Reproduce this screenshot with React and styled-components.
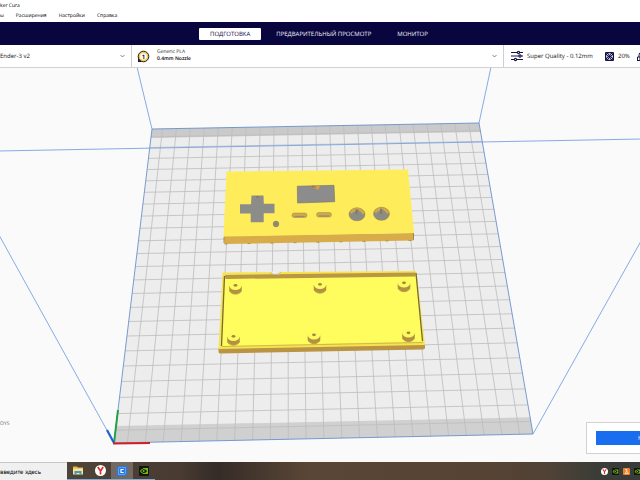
import React from 'react';
import styled, { createGlobalStyle } from 'styled-components';

const Global = createGlobalStyle`
  * { box-sizing: border-box; }
  body { margin: 0; overflow: hidden; font-family: "Open Sans", "Noto Sans", sans-serif; background: #fafafa; text-rendering: geometricPrecision; }
  button { font-family: inherit; text-rendering: inherit; border: 0; padding: 0; cursor: pointer; }
`;

const Page = styled.div`
  height: 100vh;
  display: flex;
  flex-direction: column;
  overflow: hidden;
`;
const TitleBar = styled.header`
  height: 11px;
  flex: none;
  font-size: 5px;
  line-height: 12px;
  background: #fff;
  color: #000;
  white-space: nowrap;
`;
const MenuBar = styled.nav`
  height: 11px;
  flex: none;
  display: flex;
  gap: 12px;
  background: #fff;
`;
const MenuItem = styled.button`
  background: none;
  font-size: 5px;
  line-height: 11px;
  color: #000;
`;
const StageBar = styled.nav`
  height: 23px;
  flex: none;
  display: flex;
  justify-content: center;
  align-items: center;
  gap: 4px;
  background: #09053f;
  padding-right: 2px;
`;
const Stage = styled.button`
  height: 12px;
  padding: 0 11px;
  border-radius: 1px;
  font-size: 6px;
  line-height: 12px;
  white-space: nowrap;
  background: ${p => (p.$active ? '#fff' : 'transparent')};
  color: ${p => (p.$active ? '#09053f' : '#f4f3fa')};
`;
const SettingsBar = styled.div`
  height: 23px;
  flex: none;
  display: grid;
  grid-template-columns: 132fr 372fr 136fr;
  background: #fff;
  border-bottom: 1px solid #d2d2d4;
`;
const Selector = styled.button`
  display: flex;
  align-items: center;
  min-width: 0;
  gap: ${p => p.$gap || 0}px;
  padding: 0 ${p => (p.$last ? 0 : 6)}px 0 ${p => p.$inset || 0}px;
  background: #fff;
  border-right: ${p => (p.$last ? '0' : '1px solid #cfcfd3')};
  color: #111;
  font-size: 6px;
  line-height: 7px;
  text-align: left;
  white-space: nowrap;
  overflow: hidden;
`;
const Grow = styled.span`
  flex: 1;
`;
const Stack = styled.span`
  flex: 1;
  display: flex;
  flex-direction: column;
  font-size: 5px;
  color: #222;
  b { font-weight: 600; color: #000; }
`;
const Icon = styled.svg`
  display: block;
  flex: none;
  overflow: visible;
`;
const Quality = styled.span`
  width: 74px;
  flex: none;
`;
const Percent = styled.span`
  width: 15px;
  flex: none;
`;
const Workspace = styled.main`
  flex: 1;
  min-height: 0;
  position: relative;
  background: #fafafa;
`;
const Scene = styled.svg`
  display: block;
  width: 100%;
  height: 100%;
`;
const JobName = styled.span`
  position: absolute;
  left: 0;
  bottom: 34px;
  font-size: 5px;
  line-height: 8px;
  color: #666;
`;
const ActionPanel = styled.section`
  position: absolute;
  right: -2px;
  bottom: 8px;
  width: 56px;
  height: 32px;
  padding: 8px 0 8px 9px;
  background: #fff;
  border: 1px solid #d2d2d2;
  overflow: hidden;
`;
const SliceButton = styled.button`
  width: 108px;
  height: 14px;
  display: block;
  background: #196ef0;
  color: #fff;
  font-size: 6px;
`;
const Taskbar = styled.footer`
  height: 18px;
  flex: none;
  display: flex;
  align-items: stretch;
  background: linear-gradient(90deg, #504338 10%, #493b31 28%, #342c27 34%, #5a4636 48%, #574334 75%, #504235 86%, #3a3d37 93%, #383b38);
`;
const Search = styled.button`
  width: 67px;
  flex: none;
  background: #f0f0f0;
  border-top: 1px solid #c8c8c8;
  color: #000;
  && { font-family: "Noto Sans", sans-serif; }
  font-size: 6px;
  line-height: 16px;
  text-align: left;
  white-space: nowrap;
`;
const TaskButton = styled.button`
  width: 22px;
  display: flex;
  align-items: center;
  justify-content: center;
  background: ${p => (p.$active ? '#716962' : 'transparent')};
  border-bottom: 1px solid #79aeda;
`;
const Tray = styled.div`
  display: flex;
  align-items: center;
  gap: 4px;
  margin-left: auto;
  margin-right: -1px;
`;

/* Perspective mapping of build-plate grid cells to the viewport. */
const SIZE = 23.5;
const corners = [[152, 129], [479, 123], [533, 434], [114, 443]];
const [[x0, y0], [x1, y1], [x2, y2], [x3, y3]] = corners;
const dx1 = x1 - x2, dx2 = x3 - x2, sx = x0 - x1 + x2 - x3;
const dy1 = y1 - y2, dy2 = y3 - y2, sy = y0 - y1 + y2 - y3;
const det = dx1 * dy2 - dx2 * dy1;
const g = (sx * dy2 - dx2 * sy) / det;
const h = (dx1 * sy - sx * dy1) / det;
const project = (a, b) => {
  const u = a / SIZE, v = b / SIZE, w = g * u + h * v + 1;
  const x = ((x1 - x0 + g * x1) * u + (x3 - x0 + h * x3) * v + x0) / w;
  const y = ((y1 - y0 + g * y1) * u + (y3 - y0 + h * y3) * v + y0) / w;
  return x.toFixed(1) + ' ' + y.toFixed(1);
};
const quad = (a, b) => `M${project(0, a)}L${project(SIZE, a)}L${project(SIZE, b)}L${project(0, b)}Z`;
const stops = Array.from({ length: 23 }, (_, i) => i + 0.75);
const grid = stops.map(s =>
  `M${project(s, 0)}L${project(s, SIZE)}M${project(0, s)}L${project(SIZE, s)}`).join('');

const posts = [[235.5, 286], [320, 285], [404, 283.5], [233.5, 337], [314, 335.5], [408.5, 333.5]];

const Post = ({ x, y }) => (
  <g>
    <path d={`M${x - 6.3} ${y}v3a6.3 5 0 0 0 12.6 0v-3z`} fill="#b39140" />
    <path d={`M${x - 6} ${y + 4}a6 4.200 0 0 0 12 0`} fill="none" stroke="#927a3b" strokeWidth=".6" />
    <ellipse cx={x} cy={y - 0.5} rx="6.200" ry="4.6" fill="#fffb5e" />
    <ellipse cx={x} cy={y - 0.7} rx="1.900" ry="1.4" fill="#9c8a40" />
  </g>
);

const BuildPlate = () => (
  <Scene viewBox="0 68 640 394" preserveAspectRatio="xMidYMid meet" role="img" aria-label="3D">
    <path d={quad(0, SIZE)} fill="#ededed" />
    <path d={quad(0, 0.85)} fill="#cacaca" />
    <path d={quad(22.5, SIZE)} fill="#d0d0d0" />
    <path d={grid} fill="none" stroke="#bcbcbc" strokeWidth=".8" />
    <path d={quad(0, SIZE)} fill="none" stroke="#6c91c9" strokeWidth=".9" />
    <path d="M137 67 152 129M491 67 479 123M-2 151 642 139M-1 235 114 443M641 241 533 434" fill="none" stroke="#79a2e3" strokeWidth=".9" />
    <path d="M114 443 118 410" stroke="#23a044" strokeWidth="2" />
    <path d="M114 443 107 430" stroke="#1c64d4" strokeWidth="2.2" />
    <path d="M113 443.5 150 443" stroke="#d01f27" strokeWidth="2" />

    <path d="M224 236 414 233 413.5 240.5 224.5 244Z" fill="#d8ad49" />
    <path d="M226.5 171.5 408 169.5 414 233 223.5 236.5Z" fill="#ffec5b" />
    <path d="M224 237v6M413.5 233v7" stroke="#8a7040" strokeWidth=".7" />
    <path d="M224.5 244 413.5 240.5" stroke="#aa883f" strokeWidth=".8" strokeDasharray="3 20" />
    <path d="M251.5 195.5h12l.3 8.3h10.7v9.5h-10.8v9h-13v-8.7h-10.7v-9.3h11z" fill="#8c8c89" />
    <path d="M297.3 186.2 334 185.3 334.7 201.7 297.5 203Z" fill="#8c8c8c" stroke="#77736a" strokeWidth=".6" />
    <path d="M314 186 320 186 318.5 189.5 315.5 189Z" fill="#d6a142" />
    <path d="M312 186.2h3l1.5 2" fill="none" stroke="#c9552f" strokeWidth=".7" />
    <path d="M256 197h3" stroke="#ad5544" strokeWidth=".8" />
    {[299.5, 324].map(x => (
      <g key={x}>
        <rect x={x - 7.5} y={x > 310 ? 212.5 : 213} width="15" height="4.5" rx="2.2" fill="#cfa947" stroke="#a18945" strokeWidth=".5" />
        <path d={`M${x - 5} ${x > 310 ? 216 : 216.5}h10`} stroke="#8c8c80" strokeWidth="1.2" />
      </g>
    ))}
    <circle cx="276" cy="224" r="2.9" fill="#8d887a" stroke="#a28a45" strokeWidth=".6" />
    {[[357, 214.3], [381.5, 213.8]].map(([x, y]) => (
      <g key={x}>
        <ellipse cx={x} cy={y} rx="8" ry="6.5" fill="#8c8c87" stroke="#a18a42" strokeWidth=".6" />
        <path d={`M${x - 7} ${y - 2.5}q2-3.600 7-3.800 5.500 .2 7.500 4.800l-2 2q-1-3.500-3.500-3.500v-1.500h-3v1.500q-3 0-4.500 3z`} fill="#d0a944" />
        <path d={`M${x - 0.5} ${y - 5}v5`} stroke="#7e776c" strokeWidth="1.800" />
      </g>
    ))}

    <path d="M218.5 348 425 344v3.5q0 1.8-2 2L220 353.5q-1.500 0-1.500-2z" fill="#b99443" />
    <path d="M222.5 272.500 415 271q1.500 0 1.700 1.500L425 345 218.500 349Z" fill="#f7e352" />
    <path d="M225 276.500 416 272.500 422.500 341.500 221.500 346Z" fill="#fffc5e" />
    <path d="M225 275 415.500 272.500 415.500 276.500 225.500 279Z" fill="#ba9843" />
    <path d="M224.500 276 221.500 346M416 273 422.500 341" fill="none" stroke="#776a38" strokeWidth="1.300" />
    <path d="M222 346.500 423 342.500" stroke="#c7ad46" strokeWidth=".8" />
    <path d="M270.500 271.500h10l-1.500 3h-6z" fill="#eee" />
    <path d="M270 272.500q3 2.500 6 2t5-2.500" fill="none" stroke="#c3a94d" strokeWidth=".7" />
    {posts.map(([x, y]) => <Post key={x} x={x} y={y} />)}
  </Scene>
);

const Chevron = () => (
  <Icon width="5" height="4" viewBox="0 0 5 4"><path d="M.5 1 2.500 3 4.500 1" fill="none" stroke="#555" strokeWidth=".7" /></Icon>
);
const Spool = () => (
  <Icon width="13" height="13" viewBox="0 0 13 13">
    <path d="M1 5v7h4" fill="#171438" />
    <circle cx="6.500" cy="6.500" r="5.300" fill="#f5ca48" stroke="#272029" strokeWidth="1" />
    <circle cx="6.500" cy="6.500" r="3.300" fill="#fff" />
    <text x="6.500" y="8.500" textAnchor="middle" fontSize="6" fontWeight="700" fill="#171438">1</text>
  </Icon>
);
const Sliders = () => (
  <Icon width="12" height="10" viewBox="0 0 12 10" fill="#fff" stroke="#15134a" strokeWidth="1.100">
    <path d="M0 1.500h12M0 5h12M0 8.500h12" />
    <circle cx="7.500" cy="1.500" r="1.100" /><circle cx="9" cy="5" r="1.100" /><circle cx="4.500" cy="8.500" r="1.100" />
  </Icon>
);
const Infill = () => (
  <Icon width="9" height="9" viewBox="0 0 9 9">
    <rect width="9" height="9" rx="1" fill="#15134a" />
    <path d="M3 1.200h3L4.500 2.900zM3 7.800h3L4.500 6.100zM1.200 3v3L2.900 4.500zM7.800 3v3L6.100 4.500z" fill="#fff" />
    <path d="M1.800 1.800 3.600 3.600M7.200 1.800 5.400 3.600M1.800 7.200 3.600 5.400M7.200 7.200 5.400 5.400" stroke="#fff" strokeWidth=".8" />
  </Icon>
);
const Support = () => (
  <Icon width="9" height="9" viewBox="0 0 9 9" fill="none" stroke="#15134a" strokeWidth="1">
    <path d="M2 5V3a2.500 2.500 0 0 1 5 0v2M.5 8V5h8v3M0 8.500h9M3 5v3" />
  </Icon>
);
const Folder = () => (
  <Icon width="10" height="9" viewBox="0 0 10 9">
    <path d="M0 .5h4l1 1h5V8H0z" fill="#e3b341" /><path d="M0 2.500h10v6H0z" fill="#ffe08a" />
    <path d="M1.500 8.500V5h7v3.500H6.500V7h-3v1.500z" fill="#369bd9" />
  </Icon>
);
const Yandex = ({ size = 11 }) => (
  <Icon width={size} height={size} viewBox="0 0 11 11">
    <circle cx="5.500" cy="5.500" r="5.500" fill="#fff" />
    <path d="M2.800 2 5.500 6 8.200 2M5.500 5.500V9.500" fill="none" stroke="#e12b2b" strokeWidth="1.700" />
  </Icon>
);
const CuraMark = () => (
  <Icon width="10" height="10" viewBox="0 0 10 10">
    <path d="M2 0h8v8L8 10H0V2z" fill="#2678e4" />
    <path d="M2 1.500h6.500v5.500L7.500 8.500H1.500V2.500z" fill="none" stroke="#a9cbff" strokeWidth=".5" />
    <path d="M6.700 3.500H4v3h2.700" fill="none" stroke="#fff" strokeWidth="1.200" />
  </Icon>
);
const Nvidia = ({ size = 10 }) => (
  <Icon width={size} height={size} viewBox="0 0 10 10">
    <rect width="10" height="10" rx="1" fill="#10180c" />
    <path d="M4 2h5v6H4V7q3 .5 4-2Q6.500 3 4 3zM1 5q1-2 3-2v1Q2.500 4 2.200 5 3 6.500 4 6.500v1Q2 7 1 5z" fill="#78b51c" />
    <circle cx="4.700" cy="5" r="1" fill="#78b51c" />
  </Icon>
);
const Flame = () => (
  <Icon width="7" height="7" viewBox="0 0 7 7">
    <rect width="7" height="7" rx="1" fill="#ee812d" />
    <path d="M2 1.500h2L3 3.500M4.500 2.500 2 5.500h3.500L4 3.500" fill="none" stroke="#fff0d8" strokeWidth=".7" />
  </Icon>
);

export default function App() {
  return (
    <Page>
      <Global />
      <TitleBar>ker Cura</TitleBar>
      <MenuBar>
        <MenuItem>ы</MenuItem>
        <MenuItem>Расширения</MenuItem>
        <MenuItem>Настройки</MenuItem>
        <MenuItem>Справка</MenuItem>
      </MenuBar>
      <StageBar>
        <Stage $active>ПОДГОТОВКА</Stage>
        <Stage>ПРЕДВАРИТЕЛЬНЫЙ ПРОСМОТР</Stage>
        <Stage>МОНИТОР</Stage>
      </StageBar>
      <SettingsBar>
        <Selector><Grow>Ender-3 v2</Grow><Chevron /></Selector>
        <Selector $inset={5} $gap={7}>
          <Spool />
          <Stack><span>Generic PLA</span><b>0.4mm Nozzle</b></Stack>
          <Chevron />
        </Selector>
        <Selector $inset={7} $gap={4} $last>
          <Sliders />
          <Quality>Super Quality - 0.12mm</Quality>
          <Infill />
          <Percent>20%</Percent>
          <Support />
        </Selector>
      </SettingsBar>
      <Workspace>
        <BuildPlate />
        <JobName>OYS</JobName>
        <ActionPanel><SliceButton>Нарезка</SliceButton></ActionPanel>
      </Workspace>
      <Taskbar>
        <Search>введите здесь</Search>
        <TaskButton aria-label="Explorer"><Folder /></TaskButton>
        <TaskButton aria-label="Yandex"><Yandex /></TaskButton>
        <TaskButton $active aria-label="Cura"><CuraMark /></TaskButton>
        <TaskButton aria-label="NVIDIA"><Nvidia /></TaskButton>
        <Tray><Yandex size={7} /><Nvidia size={7} /><Flame /><Nvidia size={7} /></Tray>
      </Taskbar>
    </Page>
  );
}
